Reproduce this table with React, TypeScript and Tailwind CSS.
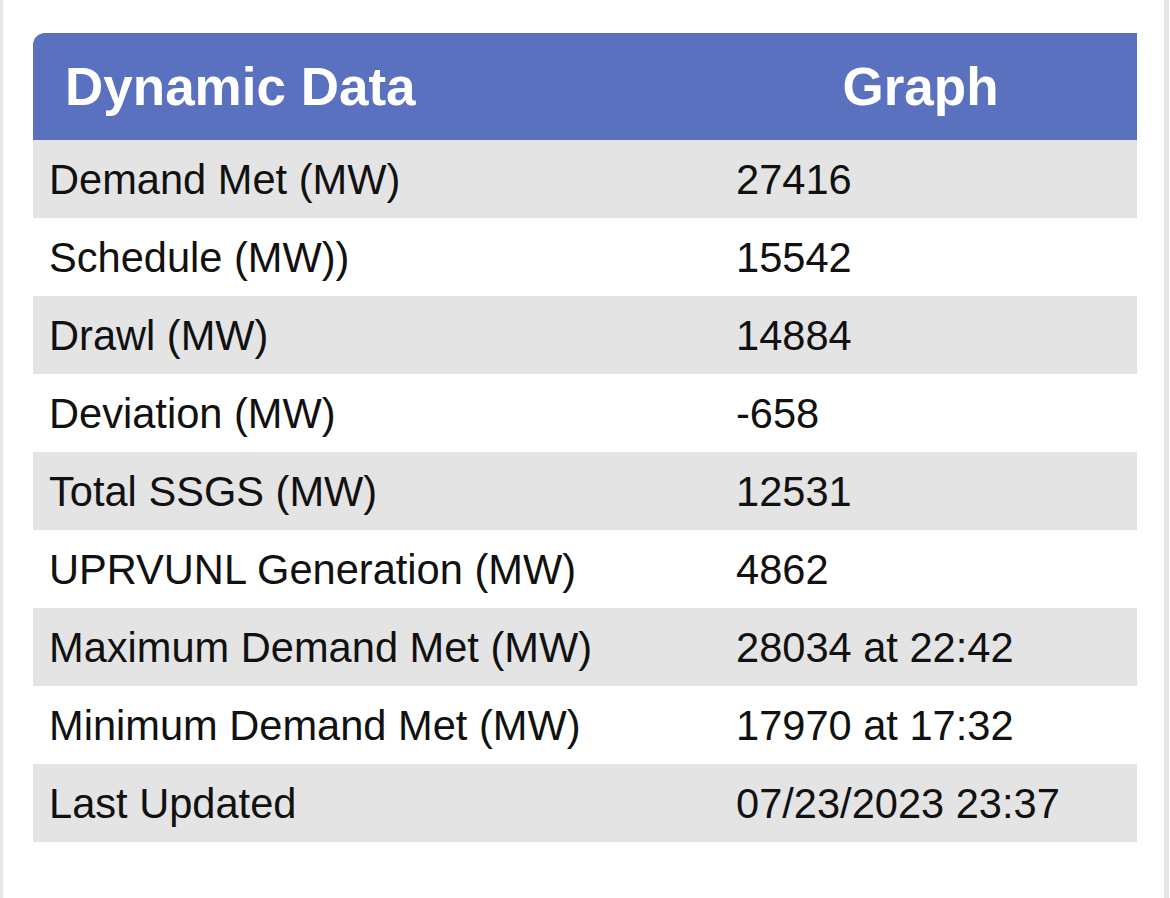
const rows: [string, string][] = [
  ["Demand Met (MW)", "27416"],
  ["Schedule (MW))", "15542"],
  ["Drawl (MW)", "14884"],
  ["Deviation (MW)", "-658"],
  ["Total SSGS (MW)", "12531"],
  ["UPRVUNL Generation (MW)", "4862"],
  ["Maximum Demand Met (MW)", "28034 at 22:42"],
  ["Minimum Demand Met (MW)", "17970 at 17:32"],
  ["Last Updated", "07/23/2023 23:37"],
];

export default function App() {
  return (
    <div className="w-[1170px] h-[898px] bg-white [font-family:'Liberation_Sans',Arial,sans-serif]">
      <div className="w-[1169px] h-full border-l-[3px] border-r-[5px] border-[#e6e6e6] bg-white pt-[33px] pl-[30px]">
        <div className="w-[1104px]">
          {/* Header */}
          <div className="flex h-[107px] items-center rounded-tl-[12px] bg-[#5a71bf] text-white font-bold text-[53px]">
            <div className="w-[687px] pl-[32px]">Dynamic Data</div>
            <div className="flex-1 text-center pr-[16px]">Graph</div>
          </div>

          {/* Rows */}
          {rows.map(([label, value], i) => (
            <div
              key={label}
              className={
                "flex h-[78px] items-center pt-[3px] text-[41.6px] text-[#111] " +
                (i % 2 === 0 ? "bg-[#e4e4e4]" : "bg-white")
              }
            >
              <div className="w-[687px] pl-[16px]">{label}</div>
              <div className="flex-1 pl-[16px]">{value}</div>
            </div>
          ))}
        </div>
      </div>
    </div>
  );
}
